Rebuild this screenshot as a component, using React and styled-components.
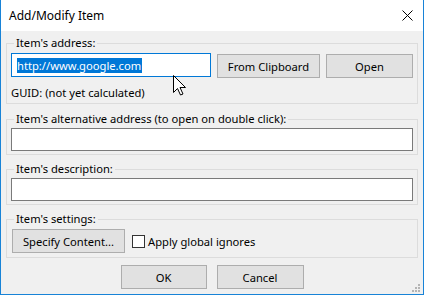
import React from 'react';
import styled, { createGlobalStyle } from 'styled-components';

const GlobalStyle = createGlobalStyle`
  html, body {
    margin: 0;
    padding: 0;
    background: #ffffff;
  }
  body {
    font-family: "Noto Sans", "Open Sans", sans-serif;
    font-size: 11.2px;
    color: #000000;
  }
`;

const Dialog = styled.div`
  position: relative;
  width: 424px;
  height: 295px;
  box-sizing: border-box;
  border: 1px solid #1883d7;
  border-top: none;
  background: #f0f0f0;
  display: flex;
  flex-direction: column;
`;

const TitleBar = styled.div`
  height: 31px;
  flex-shrink: 0;
  background: #ffffff;
  display: flex;
  align-items: center;
  padding-left: 8px;
  font-size: 12px;
`;

const Title = styled.span`
  flex: 1;
`;

const CloseButton = styled.div`
  width: 32px;
  height: 31px;
  display: flex;
  align-items: center;
  justify-content: center;
`;

const Body = styled.div`
  display: flex;
  flex-direction: column;
  padding: 12px 5px 0;
`;

const Group = styled.div`
  border: 1px solid #dcdcdc;
  margin-top: ${(p) => p.$gap || 0}px;
  padding: 0 4px ${(p) => p.$bottom || 3}px;
  display: flex;
  flex-direction: column;
`;

const Caption = styled.div`
  align-self: flex-start;
  margin: -9px 0 0 3px;
  padding: 0 2px;
  height: 16px;
  line-height: 16px;
  background: #f0f0f0;
`;

const Row = styled.div`
  display: flex;
  align-items: flex-start;
  gap: 6px;
  margin-top: ${(p) => p.$gap || 0}px;
`;

const Field = styled.div`
  box-sizing: border-box;
  width: ${(p) => (p.$width ? `${p.$width}px` : '100%')};
  height: ${(p) => p.$height || 23}px;
  margin-top: ${(p) => p.$gap || 0}px;
  border: 1px solid ${(p) => (p.$focused ? '#0078d7' : '#7a7a7a')};
  background: #ffffff;
  padding-left: 5px;
  display: flex;
  align-items: center;
  white-space: nowrap;
`;

const Selected = styled.span`
  background: #0078d7;
  color: #ffffff;
  line-height: 15px;
  padding-right: 1px;
`;

const Button = styled.button`
  box-sizing: border-box;
  width: ${(p) => p.$width}px;
  height: 24px;
  margin: ${(p) => p.$offset || 0}px 0 0 ${(p) => p.$left || 0}px;
  padding: 0;
  border: 1px solid #adadad;
  background: #e1e1e1;
  font: inherit;
  color: #000000;
`;

const Note = styled.div`
  height: 16px;
  line-height: 16px;
  margin-top: 7px;
`;

const CheckLabel = styled.label`
  display: flex;
  align-items: center;
  gap: 3px;
  height: 24px;
  margin-left: 1px;
`;

const CheckBox = styled.span`
  box-sizing: border-box;
  width: 13px;
  height: 13px;
  border: 1px solid #333333;
  background: #ffffff;
`;

const Footer = styled.div`
  display: flex;
  justify-content: center;
  gap: 10px;
  margin-top: 7px;
`;

const Pointer = styled.svg`
  position: absolute;
  left: 172px;
  top: 75px;
`;

const Grip = styled.svg`
  position: absolute;
  right: 2px;
  bottom: 1px;
`;

export default function App() {
  return (
    <>
      <GlobalStyle />
      <Dialog>
        <TitleBar>
          <Title>Add/Modify Item</Title>
          <CloseButton>
            <svg width="11" height="11" viewBox="0 0 11 11">
              <path d="M0.5 0.5 L10.5 10.5 M10.5 0.5 L0.5 10.5" stroke="#000" strokeWidth="1" />
            </svg>
          </CloseButton>
        </TitleBar>
        <Body>
          <Group $bottom={2}>
            <Caption>Item's address:</Caption>
            <Row $gap={2}>
              <Field $width={200} $height={24} $focused>
                <Selected>http://www.google.com</Selected>
              </Field>
              <Button $width={103} $offset={1}>From Clipboard</Button>
              <Button $width={87} $offset={1}>Open</Button>
            </Row>
            <Note>GUID: (not yet calculated)</Note>
          </Group>
          <Group $gap={15}>
            <Caption>Item's alternative address (to open on double click):</Caption>
            <Field $gap={1} />
          </Group>
          <Group $gap={14}>
            <Caption>Item's description:</Caption>
            <Field $gap={1} />
          </Group>
          <Group $gap={14} $bottom={4}>
            <Caption>Item's settings:</Caption>
            <Row $gap={2}>
              <Button $width={113} $left={1}>Specify Content...</Button>
              <CheckLabel>
                <CheckBox />
                Apply global ignores
              </CheckLabel>
            </Row>
          </Group>
          <Footer>
            <Button $width={86}>OK</Button>
            <Button $width={87}>Cancel</Button>
          </Footer>
        </Body>
        <Pointer width="13" height="21" viewBox="0 0 13 21">
          <path
            d="M0.5 0.5 V17.5 L4.5 13.5 L7.5 20 L10 19 L7 12.5 H12.5 Z"
            fill="#ffffff"
            stroke="#000000"
            strokeWidth="1"
          />
        </Pointer>
        <Grip width="9" height="9" viewBox="0 0 9 9">
          <g fill="#b4b4b4">
            <rect x="6" y="0" width="2" height="2" />
            <rect x="3" y="3" width="2" height="2" />
            <rect x="6" y="3" width="2" height="2" />
            <rect x="0" y="6" width="2" height="2" />
            <rect x="3" y="6" width="2" height="2" />
            <rect x="6" y="6" width="2" height="2" />
          </g>
        </Grip>
      </Dialog>
    </>
  );
}
